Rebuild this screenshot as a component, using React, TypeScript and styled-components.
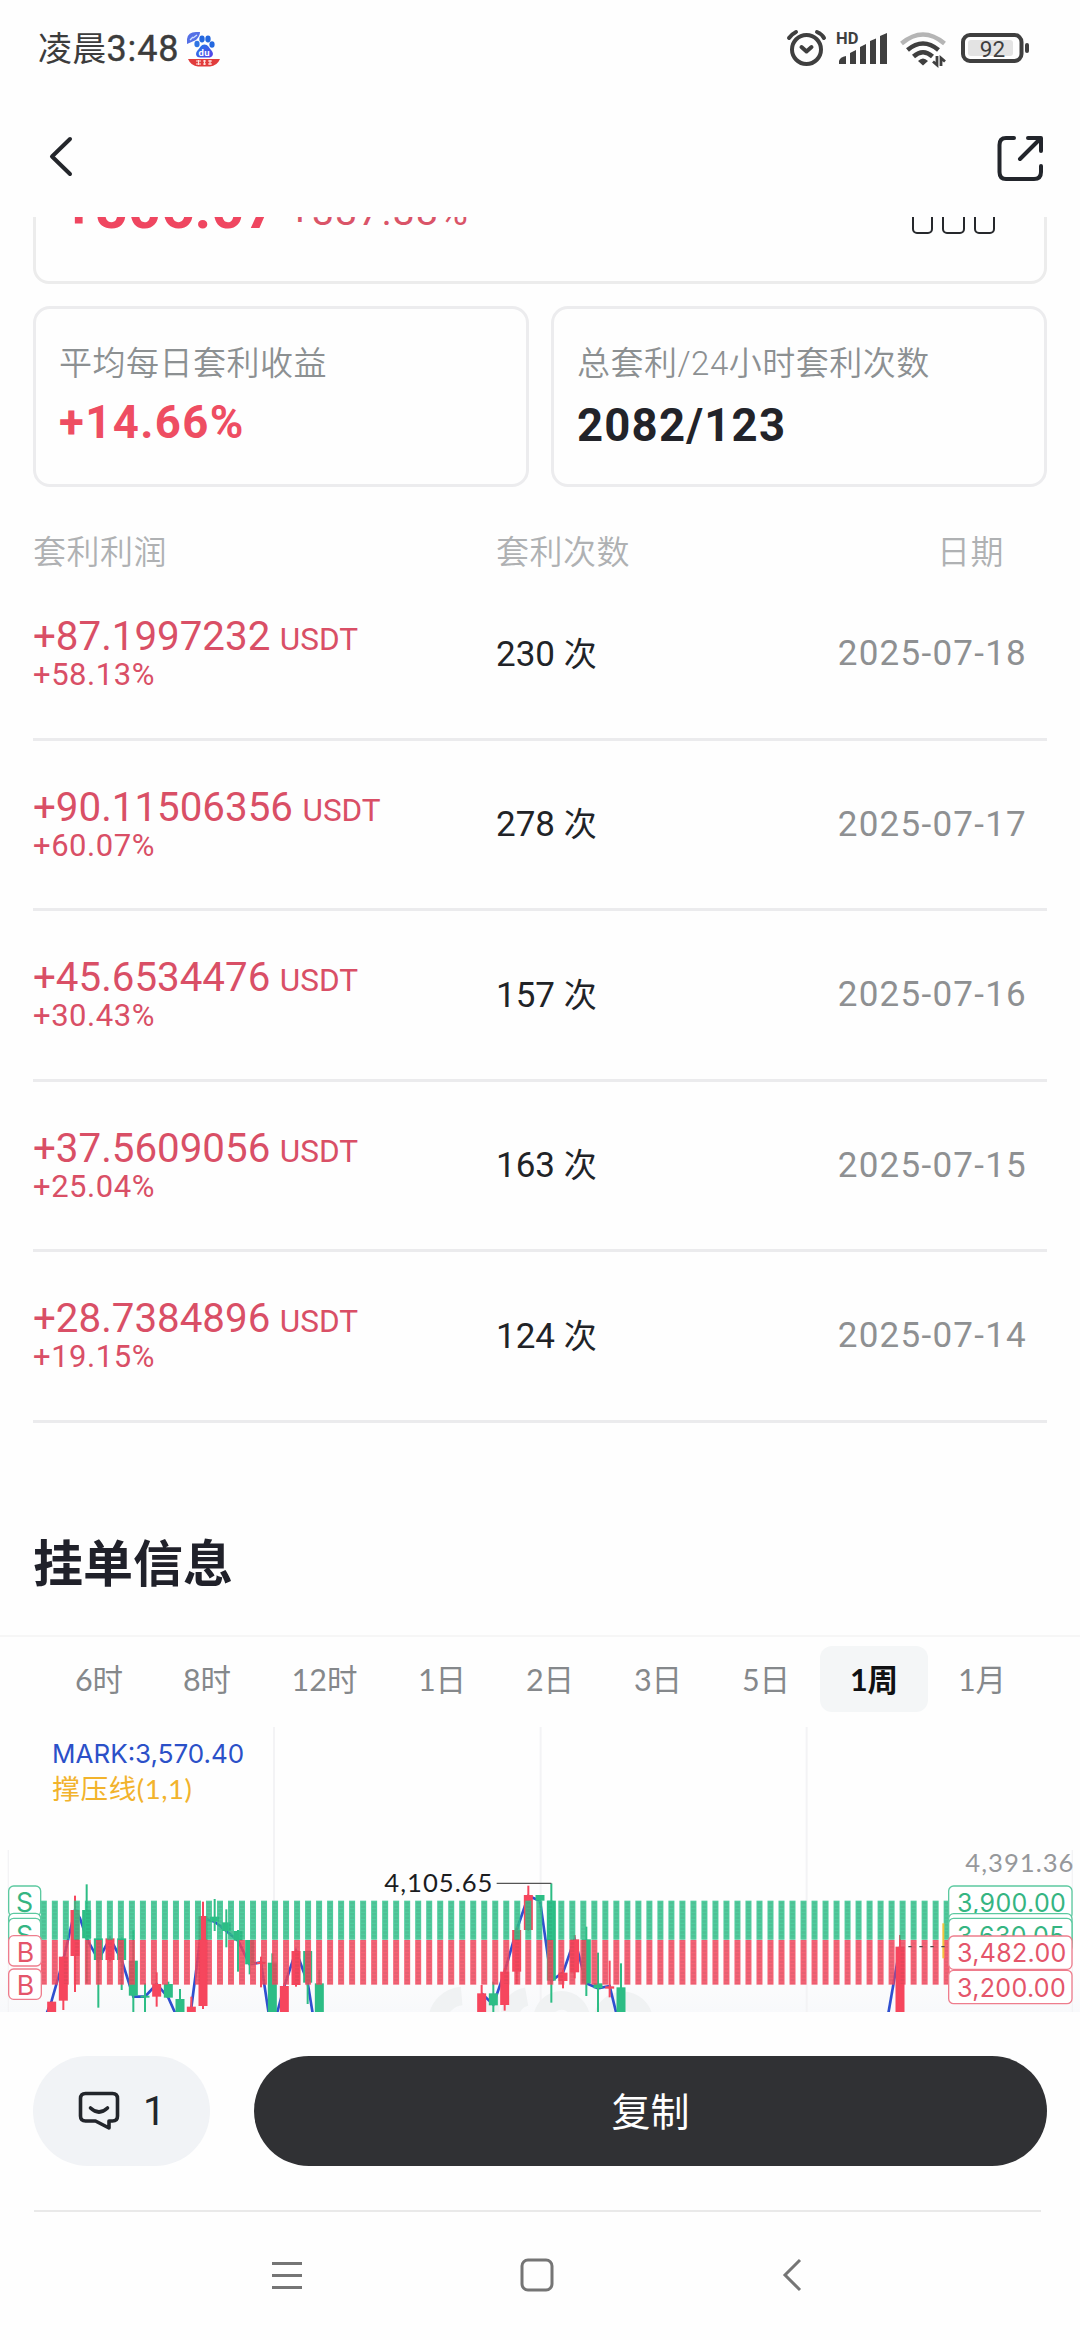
import React from "react";
import styled, { createGlobalStyle } from "styled-components";

const GlobalStyle = createGlobalStyle`
  *, *::before, *::after { box-sizing: border-box; }
  body {
    margin: 0;
    background: #fefefe;
    font-family: Roboto, "Noto Sans CJK SC", sans-serif;
    color: #22252b;
  }
`;

const RED = "#ee4d62";
const UP = "#2dbd85";
const DOWN = "#f6465d";

const Screen = styled.div`
  width: 1080px;
  height: 2340px;
  display: flex;
  flex-direction: column;
  overflow: hidden;
  background: #fefefe;
`;

/* ---------- status bar ---------- */

const StatusBar = styled.header`
  height: 98px;
  flex: none;
  display: flex;
  align-items: center;
  justify-content: space-between;
  padding: 0 50px 0 38px;
`;

const Clock = styled.div`
  display: flex;
  align-items: center;
  font-size: 34px;
  line-height: 40px;
  color: #3c3c3c;
  gap: 8px;
  letter-spacing: 0.2px;
`;

const Time = styled.span`
  font-size: 36px;
  font-weight: 400;
  letter-spacing: 0.9px;
  -webkit-text-stroke: 0.4px #3c3c3c;
`;

const StatusIcons = styled.div`
  display: flex;
  align-items: center;
`;

const BaiduBadge = () => (
  <svg width="34" height="36" viewBox="0 0 34 36">
    <defs>
      <linearGradient id="paw" x1="0" x2="1" y1="0" y2="1">
        <stop offset="0" stopColor="#1f7be6" />
        <stop offset="1" stopColor="#5a3fe8" />
      </linearGradient>
    </defs>
    <path d="M0 13V8Q1 1 9 1H13Q13 5 9 9Z" fill="#5570e6" />
    <path d="M3 9l3-3M6 7l4-3" stroke="#cfe0ff" strokeWidth="1.4" />
    <ellipse cx="10" cy="13" rx="2.6" ry="3.2" fill="#2f74e4" />
    <ellipse cx="15" cy="8" rx="2.7" ry="3.4" fill="#2468df" />
    <ellipse cx="21" cy="8" rx="2.7" ry="3.4" fill="#2468df" />
    <ellipse cx="25" cy="13.5" rx="2.6" ry="3.2" fill="#2468df" />
    <path d="M17.5 13.5C21 13.5 22 17 24.500 19.500C28 24 24.500 27 21 26.500H14C9.500 27 7.500 23 10.500 19.500C13 17 14 13.500 17.500 13.500Z" fill="url(#paw)" />
    <text x="11.6" y="24.600" fontSize="9.500" fontWeight="700" fill="#fff" fontFamily="Roboto, sans-serif">du</text>
    <path d="M1 28H33Q30 35 23 35.500H11Q4 35 1 28Z" fill="#e13c3c" />
    <path d="M9 30h5M9 33h5M11.500 29v5M16 30h3M16 33h3M17.500 29v5M21 30h4M21 33h4M23 29v5" stroke="#ffe3df" strokeWidth="1.200" />
  </svg>
);

const StatusGlyphs = () => (
  <svg width="244" height="40" viewBox="786 29 244 40" fill="none">
    {/* alarm */}
    <g stroke="#3f3f3f" strokeLinecap="round">
      <circle cx="806.500" cy="49.500" r="14.500" strokeWidth="4" />
      <path d="M789 38Q792 34 796 32M817 32Q822 34 824 38" strokeWidth="4" />
      <path d="M801.500 47L806.500 51.500L811.500 47" strokeWidth="4" strokeLinejoin="round" />
    </g>
    {/* mobile signal */}
    <text x="836" y="44" fontSize="16.500" fontWeight="700" fill="#3f3f3f" fontFamily="Roboto, sans-serif">HD</text>
    <g fill="#3f3f3f">
      <path d="M839 64V61Q840 57 846 56V64Z" />
      <path d="M850 64V53L856 50V64Z" />
      <path d="M860 64V47L866 44V64Z" />
      <path d="M870 64V41L876 38.500V64Z" />
      <path d="M880 64V36L887 33V64Z" />
    </g>
    {/* wi-fi */}
    <path d="M901.500 43.500Q923 25.500 944.500 43.500" stroke="#b5b5b5" strokeWidth="4.500" />
    <path d="M907.500 50Q923 37 938.500 50" stroke="#3f3f3f" strokeWidth="4.500" />
    <path d="M913.500 56.500Q923 48 932.500 56.500" stroke="#3f3f3f" strokeWidth="4.500" />
    <path d="M918 61Q923 56 928 61L923 65.500Z" fill="#3f3f3f" />
    <path d="M937 56V65L933 61.500M941 66V58L945 61.500" stroke="#3f3f3f" strokeWidth="2.800" />
    {/* battery */}
    <rect x="963" y="35" width="58.500" height="26" rx="7" stroke="#3f3f3f" strokeWidth="4" />
    <rect x="968" y="40" width="45" height="16" rx="3" fill="#e3e3e3" />
    <rect x="1025" y="43" width="4" height="10" rx="2" fill="#3f3f3f" />
    <text x="992.500" y="56.500" fontSize="22.500" textAnchor="middle" fill="#3f3f3f" fontFamily="Roboto, sans-serif">92</text>
  </svg>
);

/* ---------- top bar ---------- */

const TopBar = styled.nav`
  height: 119px;
  flex: none;
  display: flex;
  justify-content: space-between;
  padding: 37px 35px 0 48px;
`;

/* ---------- scrolled content ---------- */

const Content = styled.main`
  height: 1795px;
  flex: none;
  display: flex;
  flex-direction: column;
  overflow: hidden;
`;

const ProfitCard = styled.section`
  flex: none;
  width: 1014px;
  height: 122px;
  margin: -55px 0 22px 33px;
  padding: 3px 49px 0 22px;
  border: 3px solid #ececec;
  border-radius: 16px;
  display: flex;
  justify-content: space-between;
`;

const ProfitFigures = styled.div`
  display: flex;
  align-items: baseline;
  height: 80px;
  color: ${RED};
`;

const TotalProfit = styled.span`
  font-size: 58px;
  line-height: 80px;
  font-weight: 700;
  margin-left: 5px;
  color: #ef4660;
`;

const TotalPercent = styled.span`
  font-size: 39.500px;
  letter-spacing: 0.9px;
  margin-left: 11px;
  position: relative;
  top: -3.500px;
  color: #da5468;
`;

const BoxTrio = styled.div`
  display: flex;
  gap: 9px;
  padding-top: 36px;
`;

const MiniBox = styled.span<{ $w: number }>`
  width: ${(p) => p.$w}px;
  height: 30px;
  border: 2px solid #26282c;
  border-radius: 5px;
`;

const StatRow = styled.section`
  flex: none;
  display: grid;
  grid-template-columns: 1fr 1fr;
  gap: 22px;
  padding: 0 33px;
`;

const StatCard = styled.div`
  height: 181px;
  border: 3px solid #ececee;
  border-radius: 17px;
  padding: 33px 22px 0 23px;
`;

const StatLabel = styled.div`
  font-size: 33px;
  letter-spacing: 0.5px;
  line-height: 44px;
  font-weight: 350;
  color: #8c9092;
  white-space: nowrap;
`;

const StatValue = styled.div<{ $tone?: "gain" }>`
  font-size: 45.500px;
  line-height: 56px;
  font-weight: 700;
  letter-spacing: ${(p) => (p.$tone === "gain" ? "1.4px" : "1.2px")};
  margin-top: ${(p) => (p.$tone === "gain" ? "9px" : "12px")};
  color: ${(p) => (p.$tone === "gain" ? RED : "#222329")};
`;

const ROW_COLUMNS = "463px 1fr 240px";

const TableHead = styled.div`
  flex: none;
  display: grid;
  grid-template-columns: ${ROW_COLUMNS};
  margin: 44px 33px 0;
  height: 39px;
  font-size: 33px;
  letter-spacing: 0.5px;
  line-height: 44px;
  font-weight: 350;
  color: #afb1b3;
`;

const HeadDate = styled.span`
  text-align: right;
  padding-right: 43px;
`;

const TableRow = styled.div`
  flex: none;
  display: grid;
  grid-template-columns: ${ROW_COLUMNS};
  margin: 0 33px;
  height: 170.500px;
  padding-top: 43px;
  border-bottom: 3px solid #ebebed;
`;

const Gain = styled.div`
  display: flex;
  flex-direction: column;
  color: #d94f66;
`;

const GainAmount = styled.div`
  font-size: 40.300px;
  line-height: 48px;
  white-space: nowrap;
`;

const Unit = styled.span`
  font-size: 31.500px;
  margin-left: 9.500px;
`;

const GainPercent = styled.div`
  font-size: 31px;
  letter-spacing: 0.55px;
  line-height: 36px;
  margin-top: -7px;
`;

const Times = styled.div`
  font-size: 35px;
  line-height: 48px;
  padding-top: 17.500px;
  color: #212327;
`;

const TimesUnit = styled.span`
  font-size: 33px;
`;

const DateCell = styled.div`
  font-size: 35px;
  line-height: 48px;
  padding: 17px 20px 0 0;
  letter-spacing: 1.250px;
  text-align: right;
  white-space: nowrap;
  color: #8e9092;
`;

const SectionTitle = styled.h2`
  flex: none;
  margin: 106px 0 0 33px;
  height: 106.500px;
  font-size: 50px;
  line-height: 72px;
  font-weight: 700;
  color: #20212a;
`;

const Intervals = styled.div`
  flex: none;
  height: 92px;
  border-top: 2px solid #f6f6f6;
  display: flex;
  padding: 9px 43px 0 45px;
`;

const Interval = styled.button<{ $wide?: boolean; $active?: boolean }>`
  flex: none;
  width: ${(p) => (p.$wide ? 127 : 108)}px;
  height: 66px;
  border: 0;
  border-radius: 12px;
  padding: 0;
  background: ${(p) => (p.$active ? "#f4f6f7" : "transparent")};
  color: ${(p) => (p.$active ? "#101113" : "#85888b")};
  font-family: Lato, "Noto Sans CJK SC", sans-serif;
  font-size: 30.500px;
  line-height: 66px;
  font-weight: ${(p) => (p.$active ? 700 : 400)};
`;

const ChartArea = styled.section`
  flex: none;
  height: 285px;
  background: linear-gradient(#fefefe 80%, #f8f9fb);
`;

/* ---------- bottom ---------- */

const ActionBar = styled.footer`
  flex: none;
  display: flex;
  gap: 44px;
  padding: 44px 33px 0;
  height: 198px;
`;

const CommentButton = styled.button`
  width: 177px;
  height: 110px;
  border: 0;
  border-radius: 55px;
  background: #f1f3f6;
  display: flex;
  align-items: center;
  padding: 0 0 0 45px;
  gap: 23px;
  font-family: Roboto, sans-serif;
  font-size: 40px;
  color: #22252b;
`;

const CopyButton = styled.button`
  flex: 1;
  height: 110px;
  border: 0;
  border-radius: 55px;
  padding: 0 0 5px;
  background: #303134;
  color: #fff;
  font-family: "Noto Sans CJK SC", sans-serif;
  font-size: 39px;
`;

const SystemNav = styled.div`
  flex: none;
  width: 1007px;
  height: 130px;
  margin-left: 34px;
  border-top: 2px solid #e9e9e9;
  display: flex;
  justify-content: space-between;
  padding: 46px 238px 0 237px;
`;

const HomeGlyph = styled.svg`
  margin-right: 11px;
`;

/* ---------- chart ---------- */

type Candle = [x: number, top: number, bottom: number, high: number, low: number, up: boolean];

const candles: Candle[] = [
  [155, 455, 490, 455, 490, false],
  [190, 320, 452, 320, 480, false],
  [225, 180, 318, 137, 426, false],
  [260, 180, 265, 103, 400, true],
  [295, 265, 330, 265, 473, true],
  [330, 265, 330, 262, 334, false],
  [365, 265, 330, 262, 420, true],
  [400, 332, 437, 240, 490, true],
  [435, 437, 443, 400, 490, true],
  [470, 402, 440, 367, 470, false],
  [505, 402, 443, 395, 443, true],
  [540, 447, 490, 417, 490, true],
  [574, 470, 490, 440, 490, false],
  [609, 198, 468, 155, 477, false],
  [644, 200, 215, 147, 243, true],
  [679, 217, 243, 178, 292, true],
  [714, 243, 272, 240, 365, true],
  [749, 270, 343, 270, 373, true],
  [783, 336, 342, 320, 412, false],
  [817, 338, 490, 310, 490, true],
  [853, 408, 490, 400, 490, false],
  [888, 303, 405, 300, 410, false],
  [923, 303, 398, 303, 462, true],
  [958, 400, 490, 360, 490, true],
  [1445, 430, 490, 405, 490, false],
  [1480, 430, 466, 395, 490, true],
  [1514, 365, 465, 355, 482, false],
  [1550, 240, 365, 230, 402, false],
  [1585, 135, 240, 107, 243, false],
  [1620, 135, 152, 135, 155, true],
  [1654, 152, 392, 100, 458, true],
  [1689, 368, 393, 360, 415, false],
  [1724, 268, 367, 255, 385, false],
  [1759, 268, 400, 230, 438, true],
  [1794, 400, 415, 308, 490, true],
  [1829, 409, 416, 332, 442, false],
  [1863, 412, 490, 340, 490, true],
  [2700, 290, 490, 255, 490, false],
];

const trend = [
  "M140 490L155 452L190 330L225 180L240 205L260 265L295 330L330 265L365 330L400 440H435L470 402L505 443L526 490",
  "M573 480L609 205L644 215L679 243L714 272L749 343L783 337L806 490",
  "M831 490L853 408L888 303L923 398L938 490",
  "M1445 430L1480 464L1514 365L1550 240L1585 138L1620 152L1654 392L1689 368L1724 268L1759 400L1794 415L1829 408L1849 490",
  "M2665 490L2700 290",
];

const bars = Array.from({ length: 83 }, (_, i) => 122.500 + i * 33.030);

const chartFont = 'Inter, "Noto Sans CJK SC", sans-serif';
const chartNumFont = 'Lato, "Noto Sans CJK SC", sans-serif';

const Chart = () => (
  <svg width="1080" height="285" viewBox="0 -369 3240 855" display="block">
    <g stroke="#f3f3f5" strokeWidth="6">
      <path d="M822 -369V490M1622 -369V490M2420 -369V490" />
      <path d="M25 0V490M3217 0V490" strokeWidth="4" />
    </g>
    <g fill="none" stroke="#f0f2f3" strokeWidth="56">
      <path d="M1385 438A80 80 0 0 0 1312 510" />
      <path d="M1470 440V500" />
      <path d="M1530 500A60 60 0 0 1 1580 440" />
      <path d="M1628 500A58 60 0 0 1 1742 500" />
      <path d="M1806 510A64 70 0 0 1 1932 510" />
    </g>
    <g fill="none" stroke="#2f4fcf" strokeWidth="8">
      {trend.map((d) => (
        <path key={d} d={d} />
      ))}
    </g>
    {candles.map(([x, top, bottom, high, low, up]) => (
      <g key={x} fill={up ? UP : DOWN}>
        <rect x={x - 3} y={high} width="6" height={low - high} />
        <rect x={x - 13.500} y={top} width="27" height={bottom - top} />
      </g>
    ))}
    <g opacity="0.840">
      {bars.map((x) => (
        <g key={x}>
          <rect x={x} y="152" width="18" height="117" fill="#2fc48c" />
          <rect x={x} y="270" width="18" height="134" fill={DOWN} />
        </g>
      ))}
    </g>
    <g strokeDasharray="7 4" strokeWidth="12" opacity="0.080">
      {bars.map((x) => (
        <path key={x} d={`M${x + 9} 156V402`} stroke="#3a3a3a" />
      ))}
    </g>
    <path d="M2830 220V325" stroke="#f3c33a" strokeWidth="6" />
    <path d="M2725 290H2844" stroke="#4a4a4a" strokeWidth="4" strokeDasharray="10 23" />

    <text x="156" y="-260" fontSize="78" fill="#2b50c8" fontFamily={chartFont}>MARK:3,570.40</text>
    <text x="157" y="-152" fontSize="83" letterSpacing="1.500" fill="#f2b32c" fontFamily={chartNumFont}>撑压线(1,1)</text>

    <path d="M1490 100H1654" stroke="#555" strokeWidth="4" />
    <text x="1153" y="126" fontSize="77" letterSpacing="3" fill="#1b1c1f" fontFamily={chartNumFont}>4,105.65</text>
    <text x="2896" y="67" fontSize="77" letterSpacing="3" fill="#96989b" fontFamily={chartNumFont}>4,391.36</text>

    <SideTag x={26} y={108} w={96} label="S" dx={22} up />
    <SideTag x={26} y={190} w={96} dx={22} up />
    <SideTag x={26} y={205} w={96} label="S" dx={22} up />
    <SideTag x={26} y={257} w={98} label="B" dx={24} />
    <SideTag x={26} y={357} w={98} label="B" dx={24} />

    <SideTag x={2846} y={108} w={370} label="3,900.00" dx={25} up />
    <SideTag x={2846} y={191} w={370} dx={25} up />
    <SideTag x={2846} y={205} w={370} label="3,630.05" dx={25} up />
    <SideTag x={2846} y={258} w={370} label="3,482.00" dx={25} />
    <SideTag x={2846} y={361} w={370} label="3,200.00" dx={25} />
  </svg>
);

type SideTagProps = { x: number; y: number; w: number; label?: string; dx: number; up?: boolean };

const SideTag = ({ x, y, w, label, dx, up }: SideTagProps) => (
  <g>
    <rect x={x} y={y} width={w} height={w < 100 ? 91 : 100} rx="15" fill="#fff" stroke={up ? "#5cc9a0" : "#ee7d8d"} strokeWidth="4" />
    {label && (
      <text
        x={x + dx}
        y={y + 79}
        fontSize={w < 100 ? 80 : 75}
        letterSpacing="1"
        fill={up ? "#35b582" : "#e4556a"}
        fontFamily={chartFont}
      >
        {label}
      </text>
    )}
  </g>
);

/* ---------- data ---------- */

const rows = [
  { amount: "+87.1997232", percent: "+58.13%", times: 230, date: "2025-07-18" },
  { amount: "+90.11506356", percent: "+60.07%", times: 278, date: "2025-07-17" },
  { amount: "+45.6534476", percent: "+30.43%", times: 157, date: "2025-07-16" },
  { amount: "+37.5609056", percent: "+25.04%", times: 163, date: "2025-07-15" },
  { amount: "+28.7384896", percent: "+19.15%", times: 124, date: "2025-07-14" },
];

const intervals = ["6时", "8时", "12时", "1日", "2日", "3日", "5日", "1周", "1月"];

export default function App() {
  return (
    <Screen>
      <GlobalStyle />
      <StatusBar>
        <Clock>
          <span>
            凌晨<Time>3:48</Time>
          </span>
          <BaiduBadge />
        </Clock>
        <StatusIcons>
          <StatusGlyphs />
        </StatusIcons>
      </StatusBar>

      <TopBar>
        <svg width="26" height="44" viewBox="0 0 26 44" fill="none">
          <path d="M22 4L4 21.500L22 39" stroke="#24262b" strokeWidth="4" strokeLinecap="round" strokeLinejoin="round" />
        </svg>
        <svg width="48" height="48" viewBox="0 0 48 48" fill="none">
          <path
            d="M17 3H9Q2.500 3 2.500 10V37Q2.500 44 9 44H37Q44 44 44 37V31M31 3H44V16M43 4L23 24"
            stroke="#22252b"
            strokeWidth="4"
            strokeLinecap="round"
            strokeLinejoin="round"
          />
        </svg>
      </TopBar>

      <Content>
        <ProfitCard>
          <ProfitFigures>
            <TotalProfit>+506.07</TotalProfit>
            <TotalPercent>+337.38%</TotalPercent>
          </ProfitFigures>
          <BoxTrio>
            <MiniBox $w={21} />
            <MiniBox $w={23} />
            <MiniBox $w={21} />
          </BoxTrio>
        </ProfitCard>

        <StatRow>
          <StatCard>
            <StatLabel>平均每日套利收益</StatLabel>
            <StatValue $tone="gain">+14.66%</StatValue>
          </StatCard>
          <StatCard>
            <StatLabel>总套利/24小时套利次数</StatLabel>
            <StatValue>2082/123</StatValue>
          </StatCard>
        </StatRow>

        <TableHead>
          <span>套利利润</span>
          <span>套利次数</span>
          <HeadDate>日期</HeadDate>
        </TableHead>
        {rows.map((r) => (
          <TableRow key={r.date}>
            <Gain>
              <GainAmount>
                {r.amount}
                <Unit>USDT</Unit>
              </GainAmount>
              <GainPercent>{r.percent}</GainPercent>
            </Gain>
            <Times>
              {r.times} <TimesUnit>次</TimesUnit>
            </Times>
            <DateCell>{r.date}</DateCell>
          </TableRow>
        ))}

        <SectionTitle>挂单信息</SectionTitle>
        <Intervals>
          {intervals.map((t) => (
            <Interval key={t} $wide={t.length > 2} $active={t === "1周"}>
              {t}
            </Interval>
          ))}
        </Intervals>
        <ChartArea>
          <Chart />
        </ChartArea>
      </Content>

      <ActionBar>
        <CommentButton>
          <svg width="42" height="40" viewBox="0 0 42 40" fill="none">
            <path
              d="M7.500 2.500H34.500Q39.500 2.500 39.500 7.500V25Q39.500 30 34.500 30H31V37L17.500 30H7.500Q2.500 30 2.500 25V7.500Q2.500 2.500 7.500 2.500Z"
              stroke="#22252b"
              strokeWidth="3.600"
              strokeLinejoin="round"
            />
            <path d="M12.500 17Q21 25 29.500 17" stroke="#22252b" strokeWidth="3.600" strokeLinecap="round" />
          </svg>
          1
        </CommentButton>
        <CopyButton>复制</CopyButton>
      </ActionBar>

      <SystemNav>
        <svg width="32" height="34" viewBox="0 0 32 34">
          <path d="M1 5.500H31M1 17.500H31M1 29.500H31" stroke="#757575" strokeWidth="3" />
        </svg>
        <HomeGlyph width="34" height="34" viewBox="0 0 34 34">
          <rect x="2" y="2" width="30" height="30" rx="6" fill="none" stroke="#757575" strokeWidth="3" />
        </HomeGlyph>
        <svg width="22" height="34" viewBox="0 0 22 34">
          <path d="M19 2L4 17L19 32" fill="none" stroke="#757575" strokeWidth="3" />
        </svg>
      </SystemNav>
    </Screen>
  );
}
